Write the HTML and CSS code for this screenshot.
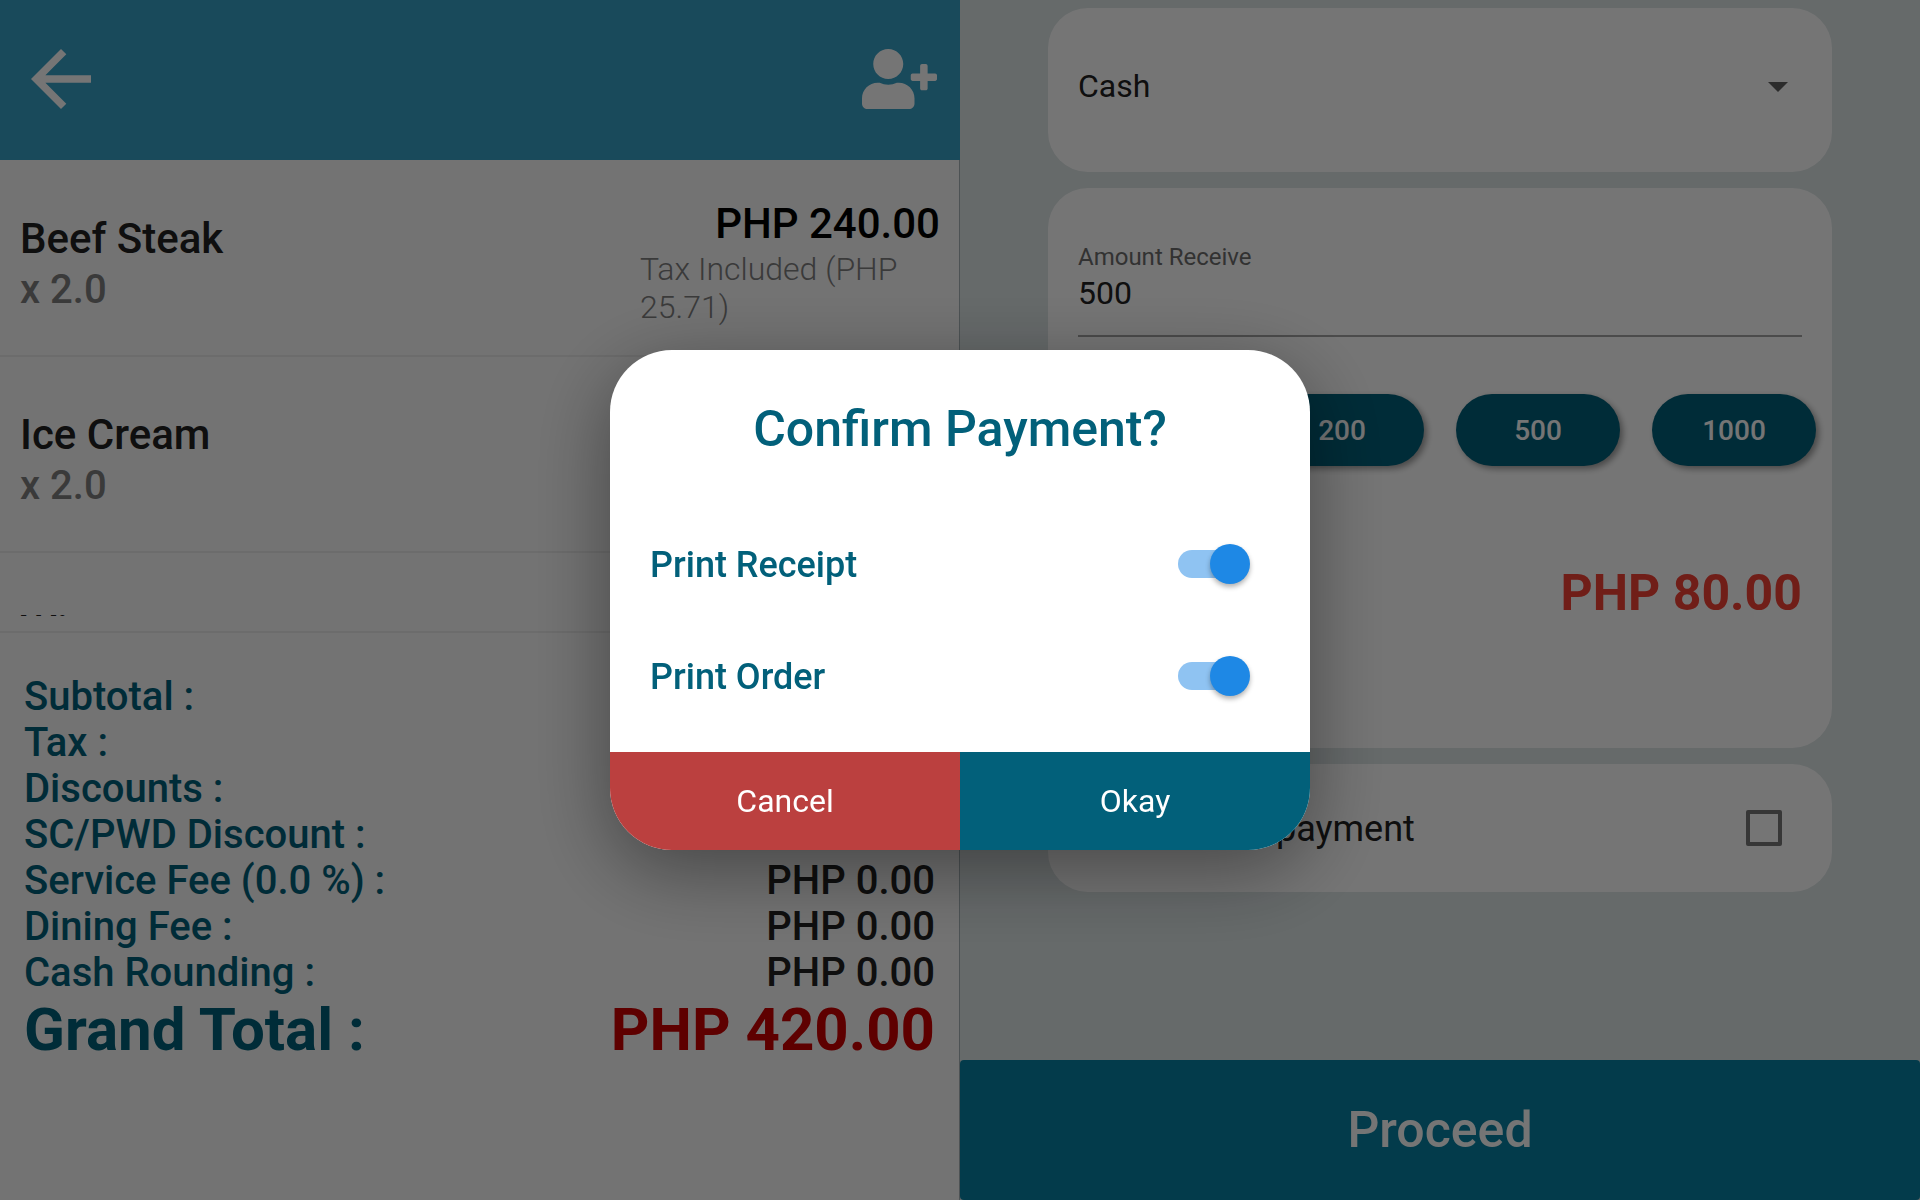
FILE: index.html
```html
<!DOCTYPE html>
<html lang="en">
<head>
  <meta charset="utf-8">
  <meta name="viewport" content="width=device-width, initial-scale=1">
  <title>Confirm Payment</title>
  <link rel="stylesheet" href="styles.css">
</head>
<body>
  <div class="app">
    <section class="order">
      <header class="order-header">
        <button class="icon-button" type="button" aria-label="Back">
          <svg class="icon-back" viewBox="0 0 24 24" aria-hidden="true"><path d="M20 11H7.83l5.59-5.59L12 4l-8 8 8 8 1.41-1.41L7.83 13H20v-2z"/></svg>
        </button>
        <button class="icon-button" type="button" aria-label="Add customer">
          <svg class="icon-user" viewBox="0 0 640 512" aria-hidden="true"><path d="M624 208h-64v-64c0-8.800-7.200-16-16-16h-32c-8.800 0-16 7.200-16 16v64h-64c-8.800 0-16 7.200-16 16v32c0 8.800 7.200 16 16 16h64v64c0 8.800 7.200 16 16 16h32c8.800 0 16-7.200 16-16v-64h64c8.800 0 16-7.200 16-16v-32c0-8.800-7.200-16-16-16zm-400 48c70.700 0 128-57.300 128-128S294.700 0 224 0 96 57.300 96 128s57.300 128 128 128zm89.600 32h-16.700c-22.200 10.200-46.900 16-72.900 16s-50.600-5.800-72.900-16h-16.700C60.200 288 0 348.200 0 422.400V464c0 26.500 21.500 48 48 48h352c26.500 0 48-21.500 48-48v-41.600c0-74.200-60.200-134.400-134.400-134.400z"/></svg>
        </button>
      </header>
      <div class="order-body">
        <ul class="items">
          <li class="item">
            <div class="item-info">
              <div class="item-name">Beef Steak</div>
              <div class="item-qty">x 2.0</div>
            </div>
            <div class="item-cost">
              <div class="item-price">PHP 240.00</div>
              <div class="item-tax">Tax Included (PHP 25.71)</div>
            </div>
          </li>
          <li class="item">
            <div class="item-info">
              <div class="item-name">Ice Cream</div>
              <div class="item-qty">x 2.0</div>
            </div>
          </li>
          <li class="item">
            <div class="item-info">
              <div class="item-name">Wine</div>
            </div>
          </li>
        </ul>
        <dl class="summary">
          <div class="row"><dt>Subtotal :</dt><dd></dd></div>
          <div class="row"><dt>Tax :</dt><dd></dd></div>
          <div class="row"><dt>Discounts :</dt><dd></dd></div>
          <div class="row"><dt>SC/PWD Discount :</dt><dd></dd></div>
          <div class="row"><dt>Service Fee (0.0 %) :</dt><dd>PHP 0.00</dd></div>
          <div class="row"><dt>Dining Fee :</dt><dd>PHP 0.00</dd></div>
          <div class="row"><dt>Cash Rounding :</dt><dd>PHP 0.00</dd></div>
          <div class="row row-total"><dt>Grand Total :</dt><dd>PHP 420.00</dd></div>
        </dl>
      </div>
    </section>

    <section class="payment">
      <div class="cards">
        <div class="card card-method">
          <select class="method" aria-label="Payment method"><option>Cash</option></select>
          <svg class="icon-caret" viewBox="0 0 24 24" aria-hidden="true"><path d="M7 10l5 5 5-5z"/></svg>
        </div>
        <div class="card card-amount">
          <label class="amount-label" for="amount">Amount Receive</label>
          <input class="amount" id="amount" type="text" inputmode="decimal" value="500">
          <div class="presets">
            <button class="preset" type="button">100</button>
            <button class="preset" type="button">200</button>
            <button class="preset" type="button">500</button>
            <button class="preset" type="button">1000</button>
          </div>
          <div class="change">PHP 80.00</div>
        </div>
        <div class="card card-split">
          <label class="split-label" for="split">Enable split payment</label>
          <input class="split" id="split" type="checkbox">
        </div>
      </div>
      <button class="proceed" type="button">Proceed</button>
    </section>
  </div>

  <div class="scrim">
    <div class="dialog" role="dialog" aria-modal="true" aria-labelledby="dialog-title">
      <h1 class="dialog-title" id="dialog-title">Confirm Payment?</h1>
      <div class="options">
        <div class="option">
          <label class="option-label" for="receipt">Print Receipt</label>
          <input class="switch" id="receipt" type="checkbox" role="switch" checked>
        </div>
        <div class="option">
          <label class="option-label" for="order">Print Order</label>
          <input class="switch" id="order" type="checkbox" role="switch" checked>
        </div>
      </div>
      <div class="actions">
        <button class="action action-cancel" type="button">Cancel</button>
        <button class="action action-okay" type="button">Okay</button>
      </div>
    </div>
  </div>
</body>
</html>
```
FILE: styles.css
```css
:root {
  --teal: #02607a;
  --ink: #212121;
}

* {
  box-sizing: border-box;
}

body {
  margin: 0;
  font-family: Roboto, "Liberation Sans", sans-serif;
  color: var(--ink);
}

button,
input,
select {
  margin: 0;
  padding: 0;
  border: 0;
  background: none;
  color: inherit;
  font: inherit;
}

.app {
  display: grid;
  grid-template-columns: 1fr 1fr;
  height: 100vh;
  overflow: hidden;
}

/* Order column */
.order {
  display: flex;
  flex-direction: column;
  min-height: 0;
  background: #fafafa;
}

.order-header {
  display: flex;
  flex: none;
  align-items: center;
  justify-content: space-between;
  height: 160px;
  padding: 0 23px 3px 16px;
  background: #38a1c6;
}

.icon-button {
  display: flex;
  color: #fff;
}

.icon-button svg {
  fill: currentColor;
}

.icon-back {
  width: 90px;
  height: 90px;
}

.icon-user {
  width: 75px;
  height: 60px;
}

.order-body {
  display: flex;
  flex: 1;
  flex-direction: column;
  min-height: 0;
  box-shadow: inset -1px 0 #a8b4b8;
}

.items {
  flex: 1;
  min-height: 0;
  margin: 0;
  padding: 1px 0 0;
  overflow: hidden;
  list-style: none;
}

.item {
  display: grid;
  grid-template-columns: 2fr 1fr;
  align-items: start;
  height: 196px;
  padding-top: 38px;
  border-bottom: 2px solid #ebebeb;
}

.item-info {
  padding: 15px 0 0 20px;
}

.item-cost {
  padding-right: 20px;
}

.item-name,
.item-price {
  font-size: 42px;
  font-weight: 500;
  line-height: 50px;
}

.item-qty {
  color: #7f7f7f;
  font-size: 40px;
  font-weight: 500;
  line-height: 52px;
}

.item-price {
  color: #000;
  text-align: right;
}

.item-tax {
  padding-top: 1px;
  color: #7f7f7f;
  font-size: 32px;
  font-weight: 300;
  line-height: 38px;
}

.summary {
  flex: none;
  margin: 15px 0 0;
  padding: 41px 0 136px;
  border-top: 2px solid #ebebeb;
  font-size: 40px;
  font-weight: 500;
  line-height: 46px;
}

.row {
  display: flex;
  justify-content: space-between;
  padding: 0 25px 0 24px;
}

.row dt {
  color: var(--teal);
}

.row dd {
  margin: 0;
}

.row-total {
  font-size: 60px;
  font-weight: 700;
  line-height: 68px;
}

.row-total dd {
  color: #cc0000;
}

/* Payment column */
.payment {
  display: flex;
  flex-direction: column;
  justify-content: space-between;
  background: #dee6e7;
}

.cards {
  display: flex;
  flex-direction: column;
  gap: 16px;
  padding: 8px 88px 0;
}

.card {
  border-radius: 40px;
  background: #fff;
}

.card-method {
  display: grid;
  align-items: center;
  padding: 50px 30px 58px;
}

.card-method > * {
  grid-area: 1 / 1;
}

.method {
  width: 100%;
  height: 56px;
  appearance: none;
  font-size: 32px;
}

.icon-caret {
  justify-self: end;
  width: 48px;
  height: 48px;
  fill: #616161;
  pointer-events: none;
}

.card-amount {
  padding: 53px 30px 125px;
}

.amount-label {
  display: block;
  color: #6e6e6e;
  font-size: 24px;
  line-height: 32px;
}

.amount {
  display: block;
  width: 100%;
  height: 64px;
  padding-bottom: 22px;
  border-bottom: 2px solid #a3a3a3;
  font-size: 32px;
  line-height: 40px;
}

.presets {
  display: grid;
  grid-template-columns: repeat(4, 1fr);
  gap: 32px;
  margin: 57px -14px 97px;
}

.preset {
  height: 72px;
  border-radius: 36px;
  background: var(--teal);
  box-shadow: 3px 3px 6px rgba(0, 0, 0, 0.38);
  color: #fff;
  font-size: 28px;
  font-weight: 500;
}

.change {
  color: #f44336;
  font-size: 50px;
  font-weight: 700;
  line-height: 60px;
  text-align: right;
}

.card-split {
  display: flex;
  align-items: center;
  justify-content: space-between;
  height: 128px;
  padding: 0 50px 0 34px;
}

.split-label {
  padding-top: 2px;
  font-size: 36px;
}

.split {
  width: 36px;
  height: 36px;
  appearance: none;
  border: 4px solid #797979;
  border-radius: 2px;
}

.proceed {
  height: 140px;
  border-radius: 4px;
  background: #0782a3;
  color: #fff;
  font-size: 50px;
  font-weight: 500;
}

/* Confirmation dialog */
.scrim {
  position: fixed;
  inset: 0;
  display: flex;
  align-items: center;
  justify-content: center;
  background: rgba(0, 0, 0, 0.54);
}

.dialog {
  width: 700px;
  max-width: 90%;
  overflow: hidden;
  border-radius: 62px;
  background: #fff;
  box-shadow: 0 20px 80px rgba(0, 0, 0, 0.4);
  color: var(--teal);
}

.dialog-title {
  margin: 50px 0;
  font-size: 50px;
  font-weight: 500;
  line-height: 58px;
  text-align: center;
}

.options {
  padding: 0 60px 20px 40px;
}

.option {
  display: flex;
  align-items: center;
  justify-content: space-between;
  height: 112px;
}

.option-label {
  padding-top: 2px;
  font-size: 36px;
  font-weight: 500;
}

.switch {
  display: grid;
  align-items: center;
  width: 72px;
  height: 40px;
  appearance: none;
}

.switch::before,
.switch::after {
  grid-area: 1 / 1;
  content: "";
}

.switch::before {
  width: 66px;
  height: 28px;
  border-radius: 14px;
  background: #8fc3f2;
}

.switch::after {
  justify-self: end;
  width: 40px;
  height: 40px;
  border-radius: 50%;
  background: #1e88e5;
  box-shadow: 0 3px 5px rgba(0, 0, 0, 0.3);
}

.actions {
  display: grid;
  grid-template-columns: 1fr 1fr;
}

.action {
  height: 98px;
  color: #fff;
  font-size: 32px;
}

.action-cancel {
  background: #bb403f;
}

.action-okay {
  background: var(--teal);
}
```
